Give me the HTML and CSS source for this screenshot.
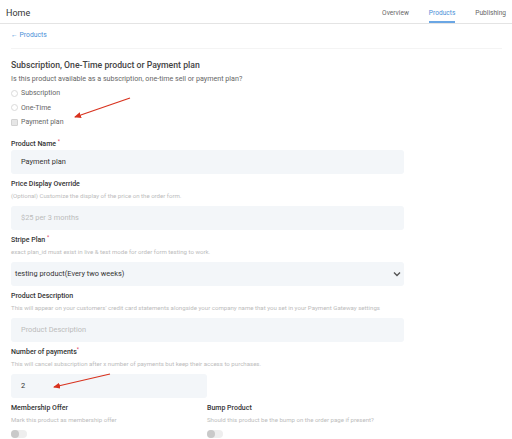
FILE: index.html
```html
<!DOCTYPE html>
<html lang="en">

<head>
    <meta charset="UTF-8">
    <meta name="viewport" content="width=device-width, initial-scale=1.0">
    <title>Products</title>
    <link rel="stylesheet" href="styles.css">
</head>

<body>
    <div class="topbar">
        <div class="home">Home</div>
        <nav class="tabs">
            <span class="tab">Overview</span>
            <span class="tab active">Products</span>
            <span class="tab">Publishing</span>
        </nav>
    </div>

    <div class="page">
        <a class="back">&larr; Products</a>
        <div class="sep"></div>

        <h2 class="title">Subscription, One-Time product or Payment plan</h2>
        <p class="subtitle">Is this product available as a subscription, one-time sell or payment plan?</p>
        <div class="choice"><span class="radio"></span>Subscription</div>
        <div class="choice"><span class="radio"></span>One-Time</div>
        <div class="choice"><span class="check"></span>Payment plan</div>

        <div class="field first">
            <label class="label">Product Name <sup>*</sup></label>
            <div class="input">Payment plan</div>
        </div>

        <div class="field">
            <label class="label">Price Display Override</label>
            <p class="help">(Optional) Customize the display of the price on the order form.</p>
            <div class="input placeholder">$25 per 3 months</div>
        </div>

        <div class="field">
            <label class="label">Stripe Plan <sup>*</sup></label>
            <p class="help">exact plan_id must exist in live &amp; test mode for order form testing to work.</p>
            <div class="input select">
                <span>testing product(Every two weeks)</span>
                <svg width="8" height="6" viewBox="0 0 8 6"><path d="M1 1.5 L4 4.5 L7 1.5" fill="none" stroke="#555" stroke-width="1.4"/></svg>
            </div>
        </div>

        <div class="field">
            <label class="label">Product Description</label>
            <p class="help">This will appear on your customers' credit card statements alongside your company name that you set in your Payment Gateway settings</p>
            <div class="input placeholder">Product Description</div>
        </div>

        <div class="field">
            <label class="label">Number of payments<sup>*</sup></label>
            <p class="help">This will cancel subscription after x number of payments but keep their access to purchases.</p>
            <div class="input half">2</div>
        </div>

        <div class="cols">
            <div class="field">
                <label class="label">Membership Offer</label>
                <p class="help">Mark this product as membership offer</p>
                <span class="toggle"></span>
            </div>
            <div class="field">
                <label class="label">Bump Product</label>
                <p class="help">Should this product be the bump on the order page if present?</p>
                <span class="toggle"></span>
            </div>
        </div>
    </div>

    <!-- annotation arrows drawn over the form -->
    <svg class="marks" width="512" height="439" viewBox="0 0 512 439">
        <defs>
            <marker id="head" markerWidth="7" markerHeight="6" refX="6" refY="3" orient="auto" markerUnits="userSpaceOnUse">
                <path d="M0 0 L7 3 L0 6 Z" fill="#d8321e"/>
            </marker>
        </defs>
        <line x1="130" y1="98" x2="75" y2="117" stroke="#d8321e" stroke-width="1.2" marker-end="url(#head)"/>
        <line x1="110" y1="374" x2="54" y2="387" stroke="#d8321e" stroke-width="1.2" marker-end="url(#head)"/>
    </svg>
</body>

</html>
```

FILE: styles.css
```css
body {
    margin: 0;
    font-family: Roboto, "Liberation Sans", sans-serif;
    color: #333;
    background: #fff;
    position: relative;
}

.topbar {
    height: 23px;
    border-bottom: 1px solid #e4e4e4;
    display: flex;
    justify-content: space-between;
    align-items: stretch;
    padding: 0 6px;
}

.home {
    font-size: 9px;
    line-height: 26px;
    color: #333;
}

.tabs {
    display: flex;
    gap: 20px;
}

.tab {
    font-size: 6.6px;
    color: #666;
    line-height: 27px;
    border-bottom: 2px solid transparent;
}

.tab.active {
    color: #4a8fd8;
    border-bottom-color: #6aa6e4;
}

.page {
    padding: 0 11px;
}

.back {
    display: block;
    margin-top: 6px;
    font-size: 6.8px;
    line-height: 11px;
    color: #4a8fd8;
}

.sep {
    margin-top: 7px;
    margin-right: -1px;
    height: 1px;
    background: #f4f4f4;
}

.title {
    margin: 9px 0 0;
    font-size: 8.7px;
    font-weight: 500;
    line-height: 14px;
    color: #444;
}

.subtitle {
    margin: 0;
    font-size: 7.15px;
    line-height: 14px;
    color: #666;
}

.choice {
    display: flex;
    align-items: center;
    gap: 3px;
    height: 14.5px;
    font-size: 7px;
    line-height: 14.5px;
    color: #666;
}

.radio {
    width: 5px;
    height: 5px;
    border: 1px solid #dadada;
    border-radius: 50%;
}

.check {
    width: 5px;
    height: 5px;
    border: 1px solid #d2d2d2;
    background: #e6e6e6;
    border-radius: 1px;
}

.field {
    margin-top: 5px;
}

.field.first {
    margin-top: 9px;
}

.label {
    display: block;
    height: 11px;
    font-size: 7px;
    font-weight: 500;
    line-height: 11px;
    color: #333;
}

.label sup {
    color: #e0335a;
    font-size: 5px;
    line-height: 0;
    vertical-align: 3px;
}

.help {
    margin: 0 0 5px;
    height: 11px;
    font-size: 6.1px;
    line-height: 11px;
    color: #bcbcbc;
    white-space: nowrap;
}

.input {
    width: 393px;
    height: 24px;
    box-sizing: border-box;
    background: #f3f6f9;
    border-radius: 3px;
    padding: 0 10px;
    font-size: 7.4px;
    line-height: 24px;
    color: #333;
}

.input.placeholder {
    color: #bcbcbc;
}

.input.half {
    width: 196px;
}

.select {
    display: flex;
    justify-content: space-between;
    align-items: center;
    padding: 0 3px 0 4px;
}

.cols {
    display: grid;
    grid-template-columns: 196px 196px;
}

.toggle {
    display: block;
    margin-top: 2px;
    width: 16px;
    height: 8px;
    border-radius: 4px;
    background: #eeeeee;
    position: relative;
}

.toggle::after {
    content: "";
    position: absolute;
    left: 0;
    top: 0;
    width: 8px;
    height: 8px;
    border-radius: 50%;
    background: #c9c9c9;
}

.marks {
    position: absolute;
    left: 0;
    top: 0;
    pointer-events: none;
}
```
